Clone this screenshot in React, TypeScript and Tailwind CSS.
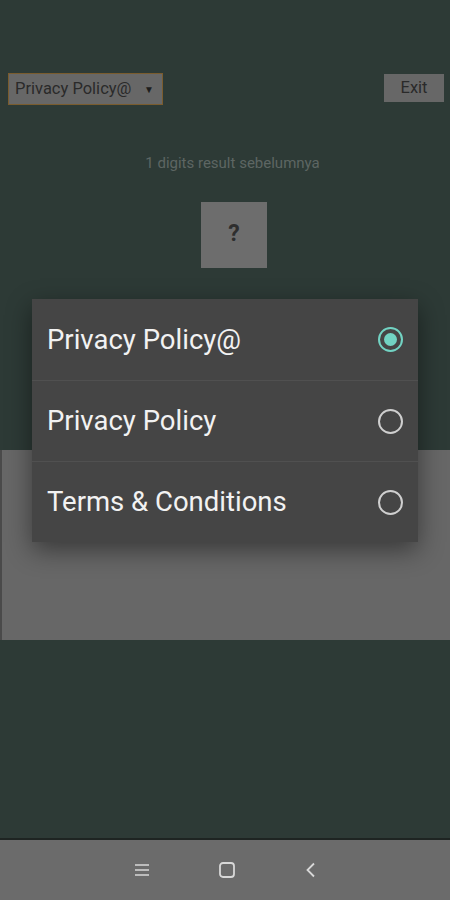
import React from 'react';

const options = ['Privacy Policy@', 'Privacy Policy', 'Terms & Conditions'];

const Radio: React.FC<{ checked: boolean }> = ({ checked }) => (
  <span
    className={`flex items-center justify-center w-[25px] h-[25px] rounded-full border-2 ${
      checked ? 'border-[#72d3c3]' : 'border-[#cfcfcf]'
    }`}
  >
    {checked && <span className="w-[13px] h-[13px] rounded-full bg-[#72d3c3]" />}
  </span>
);

const App: React.FC = () => {
  return (
    <div
      className="relative w-[450px] h-[900px] overflow-hidden flex flex-col bg-[#2d3a36]"
      style={{ fontFamily: 'Roboto, "Liberation Sans", sans-serif' }}
    >
      {/* Konten halaman (diredupkan) */}
      <div className="flex-1 flex flex-col">
        <div className="flex items-start justify-between pl-2 pr-1.5 pt-[73px]">
          <div className="flex items-center justify-between w-[155px] h-8 border border-[#7a5c2e] bg-[#676767] pl-[6px] pr-[8px]">
            <span className="text-[16.5px] text-[#2a2a2a]">Privacy Policy@</span>
            <span className="text-[10px] text-[#1e1e1e]">▼</span>
          </div>
          <div className="mt-px flex items-center justify-center w-[60px] h-[28px] bg-[#676767] text-[16.5px] text-[#2a2a2a]">
            Exit
          </div>
        </div>

        <p className="mt-[47px] pl-[15px] text-center text-[15px] text-[#5d6663]">1 digits result sebelumnya</p>

        <div className="mt-[27px] self-center ml-[18px] flex items-center justify-center w-[66px] h-[66px] bg-[#6d6d6d] text-[23px] font-bold text-[#2e2e2e]">
          ?
        </div>

        <div className="mt-[182px] h-[190px] bg-[#676767] border-l-2 border-[#4a4a4a]" />
      </div>

      {/* Navigasi sistem */}
      <div className="h-[62px] border-t-2 border-[#1e2422] bg-[#6b6b6b] flex items-center justify-center gap-[68px] pl-[2px]">
        <svg width="16" height="16" viewBox="0 0 16 16" fill="none" stroke="#d8d8d8" strokeWidth="1.6">
          <path d="M1 3h14M1 8h14M1 13h14" />
        </svg>
        <svg width="18" height="18" viewBox="0 0 18 18" fill="none" stroke="#d8d8d8" strokeWidth="1.8">
          <rect x="2" y="2" width="14" height="14" rx="3" />
        </svg>
        <svg width="14" height="16" viewBox="0 0 14 16" fill="none" stroke="#d8d8d8" strokeWidth="1.8">
          <path d="M10 1.5 3.5 8l6.5 6.5" />
        </svg>
      </div>

      {/* Dialog pilihan */}
      <div className="absolute left-[32px] top-[299px] w-[386px] bg-[#454545] shadow-[0_8px_24px_rgba(0,0,0,0.45)]">
        {options.map((opt, i) => (
          <div
            key={opt}
            className={`flex items-center justify-between h-[81px] pl-[15px] pr-[15px] ${
              i > 0 ? 'border-t border-[#505050]' : ''
            }`}
          >
            <span className="text-[27.5px] text-[#f2f2f2]">{opt}</span>
            <Radio checked={i === 0} />
          </div>
        ))}
      </div>
    </div>
  );
};

export default App;
